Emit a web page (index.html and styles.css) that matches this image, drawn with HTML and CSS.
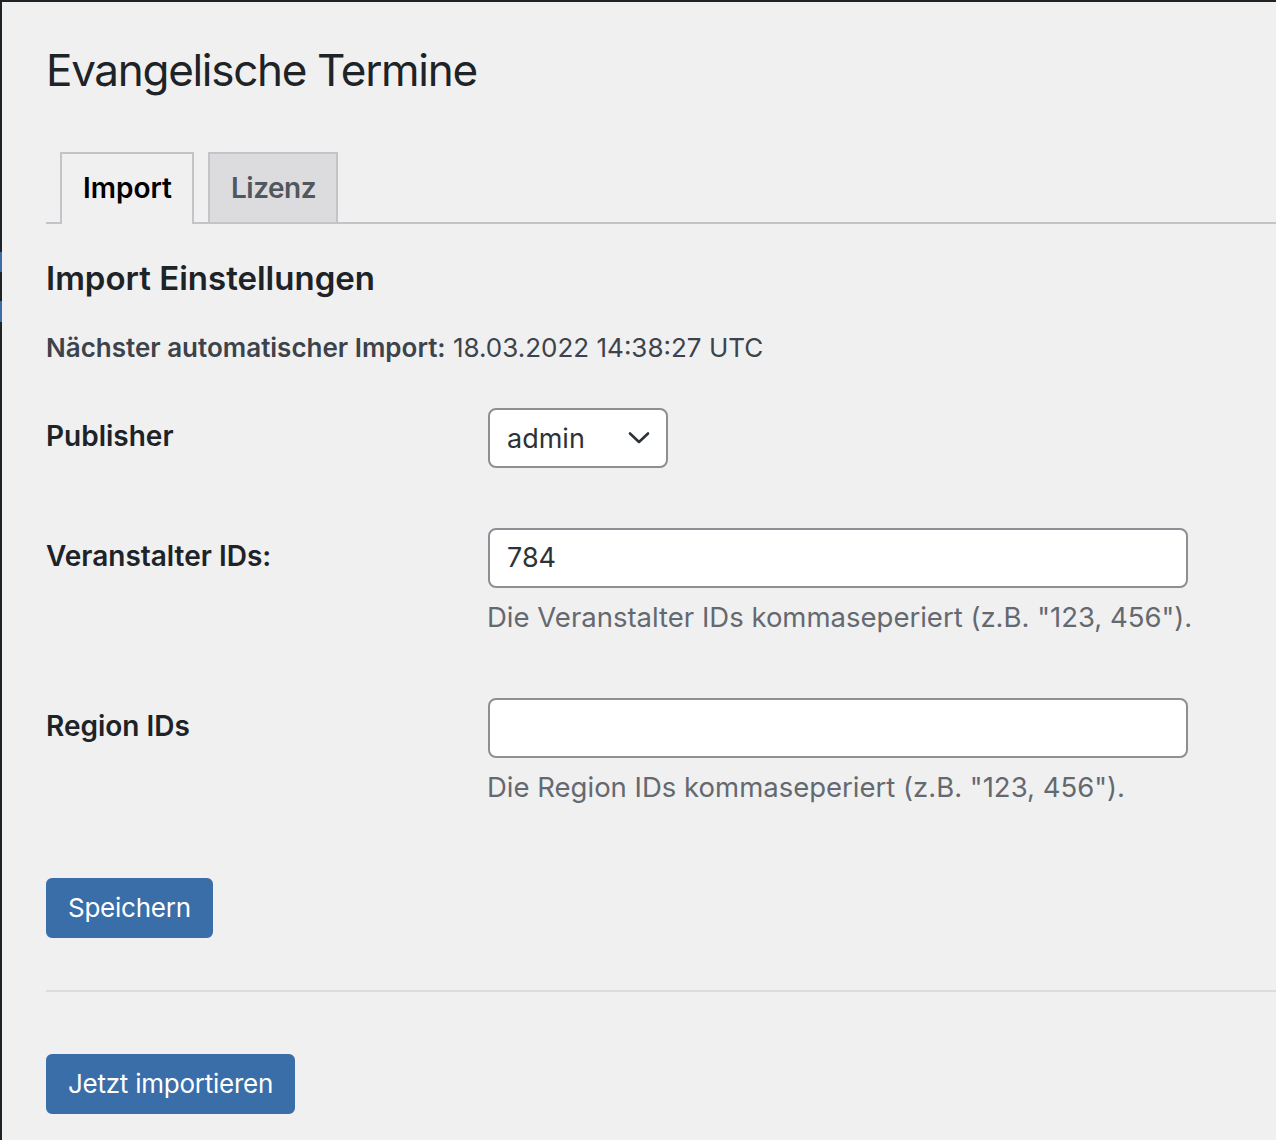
FILE: index.html
```html
<!DOCTYPE html>
<html lang="de">
<head>
<meta charset="utf-8">
<title>Evangelische Termine</title>
<link rel="stylesheet" href="styles.css">
</head>
<body>
<div class="admin">
  <div class="sidebar-edge">
    <span class="edge-mark edge-mark-1"></span>
    <span class="edge-mark edge-mark-2"></span>
  </div>
  <main class="wrap">
    <h1 class="page-title">Evangelische Termine</h1>
    <nav class="nav-tab-wrapper">
      <a class="nav-tab nav-tab-active">Import</a>
      <a class="nav-tab">Lizenz</a>
    </nav>
    <h2 class="section-title">Import Einstellungen</h2>
    <p class="next-import"><strong>Nächster automatischer Import:</strong> 18.03.2022 14:38:27 UTC</p>
    <div class="form-table">
      <div class="form-row">
        <label class="form-label">Publisher</label>
        <div class="form-field">
          <div class="select">
            <span class="select-value">admin</span>
            <svg class="chevron" width="22" height="14" viewBox="0 0 22 14"><path d="M2 2.5 L11 11 L20 2.5" fill="none" stroke="#2c3338" stroke-width="2.6" stroke-linecap="round" stroke-linejoin="round"/></svg>
          </div>
        </div>
      </div>
      <div class="form-row">
        <label class="form-label">Veranstalter IDs:</label>
        <div class="form-field">
          <div class="text-input">784</div>
          <p class="description">Die Veranstalter IDs kommaseperiert (z.B. "123, 456").</p>
        </div>
      </div>
      <div class="form-row">
        <label class="form-label">Region IDs</label>
        <div class="form-field">
          <div class="text-input"></div>
          <p class="description">Die Region IDs kommaseperiert (z.B. "123, 456").</p>
        </div>
      </div>
    </div>
    <div class="submit">
      <button class="button-primary">Speichern</button>
    </div>
    <hr class="divider">
    <div class="import-now">
      <button class="button-primary">Jetzt importieren</button>
    </div>
  </main>
</div>
</body>
</html>
```

FILE: styles.css
```css
html, body {
  margin: 0;
  padding: 0;
  background: #f0f0f1;
}

body {
  font-family: Inter, "Noto Sans", "Liberation Sans", sans-serif;
  color: #1d2327;
  overflow: hidden;
}

.admin {
  display: flex;
  min-height: 1140px;
  border-top: 2px solid #1d2327;
  box-sizing: border-box;
}

.sidebar-edge {
  width: 2px;
  flex: none;
  background: #1d2327;
  position: relative;
}

.edge-mark {
  position: absolute;
  left: 0;
  width: 2px;
  background: #3a6ea8;
}

.edge-mark-1 { top: 250px; height: 20px; }
.edge-mark-2 { top: 299px; height: 21px; }

.wrap {
  flex: 1;
  padding-left: 44px;
}

.page-title {
  margin: 0;
  padding-top: 38px;
  font-size: 44px;
  font-weight: 400;
  line-height: 60px;
  letter-spacing: -1.3px;
}

.nav-tab-wrapper {
  display: flex;
  margin-top: 52px;
  border-bottom: 2px solid #c3c4c7;
  height: 70px;
}

.nav-tab {
  display: block;
  margin-left: 14px;
  padding: 10px 20px 10px 21px;
  height: 48px;
  line-height: 48px;
  border: 2px solid #c3c4c7;
  border-bottom: none;
  background: #dcdcde;
  color: #50575e;
  font-size: 28px;
  font-weight: 600;
}

.nav-tab-active {
  background: #f0f0f1;
  color: #000;
  height: 50px;
}

.nav-tab + .nav-tab {
  letter-spacing: -0.5px;
}

.section-title {
  margin: 32px 0 0;
  font-size: 33px;
  font-weight: 600;
  line-height: 44px;
}

.next-import {
  margin: 28px 0 0;
  font-size: 26px;
  line-height: 40px;
  color: #3c434a;
}

.next-import strong {
  font-weight: 600;
}

.form-table {
  margin-top: 10px;
}

.form-row {
  display: grid;
  grid-template-columns: 442px 1fr;
}

.form-label {
  padding-top: 40px;
  font-size: 28px;
  font-weight: 600;
  line-height: 36px;
}

.form-field {
  padding: 30px 0;
}

.select {
  box-sizing: border-box;
  width: 180px;
  height: 60px;
  border: 2px solid #8c8f94;
  border-radius: 8px;
  background: #fff;
  display: flex;
  align-items: center;
  justify-content: space-between;
  padding: 0 16px 0 17px;
  font-size: 27px;
  color: #2c3338;
}

.chevron {
  display: block;
}

.text-input {
  box-sizing: border-box;
  width: 700px;
  height: 60px;
  border: 2px solid #8c8f94;
  border-radius: 8px;
  background: #fff;
  padding: 0 17px;
  font-size: 27px;
  line-height: 56px;
  color: #2c3338;
}

.description {
  margin: 8px 0 0 -1px;
  font-size: 27.5px;
  line-height: 42px;
  color: #646970;
}

.submit {
  padding-top: 40px;
}

.button-primary {
  display: block;
  height: 60px;
  padding: 0 20px;
  border: 2px solid #3a6ea8;
  border-radius: 6px;
  background: #3a6ea8;
  color: #fff;
  font-family: inherit;
  font-size: 26px;
  line-height: 56px;
  letter-spacing: -0.25px;
}

.divider {
  margin: 52px 0 0;
  border: none;
  border-top: 2px solid #dcdcde;
  height: 0;
}

.import-now {
  padding-top: 62px;
}
```
